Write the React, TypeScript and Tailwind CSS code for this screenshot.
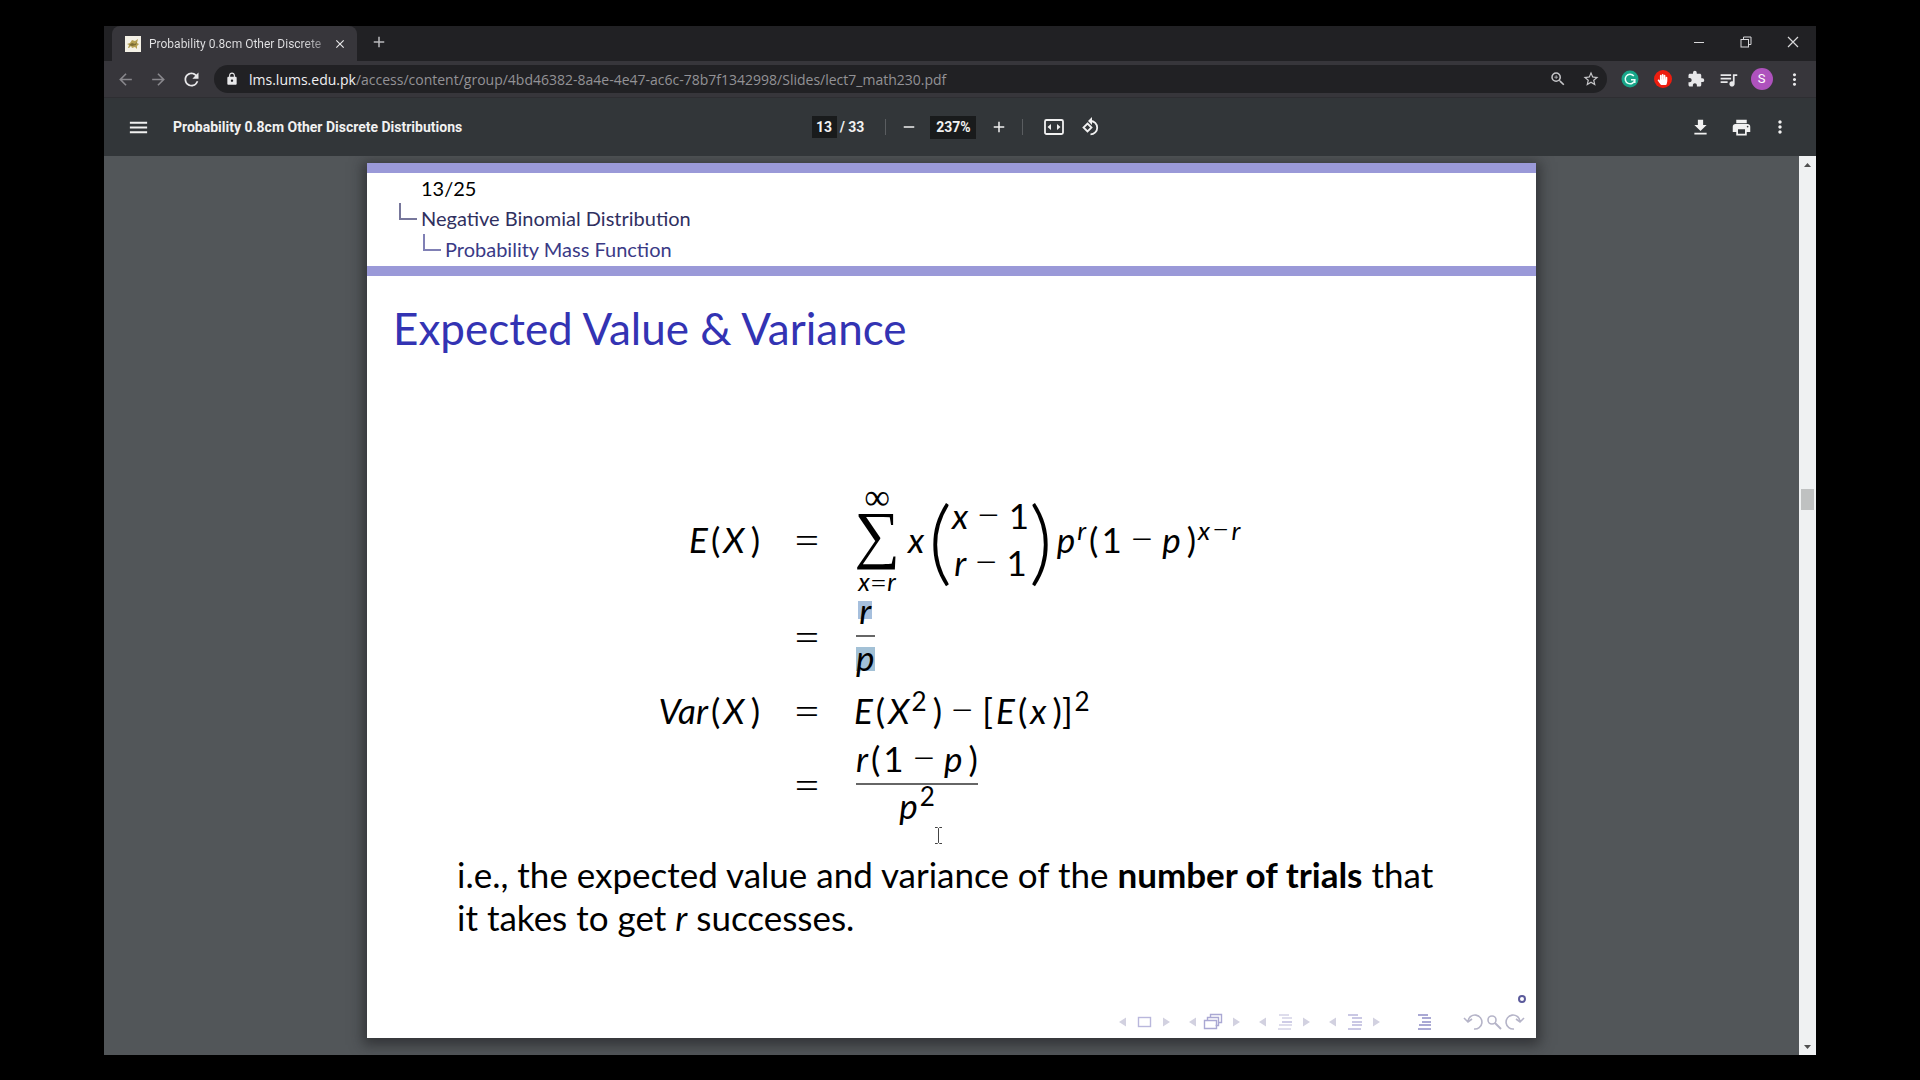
import type { ReactNode } from "react";
import {
  MdAdd,
  MdArrowBack,
  MdArrowForward,
  MdClose,
  MdExtension,
  MdGetApp,
  MdLock,
  MdMenu,
  MdMoreVert,
  MdPrint,
  MdQueueMusic,
  MdRefresh,
  MdRemove,
  MdStarBorder,
  MdZoomIn,
} from "react-icons/md";
import { FaHandPaper } from "react-icons/fa";

function IconButton({ label, className = "", children }: { label: string; className?: string; children: ReactNode }) {
  return (
    <button type="button" aria-label={label} className={`flex h-8 shrink-0 items-center justify-center ${className}`}>
      {children}
    </button>
  );
}

function TabStrip() {
  return (
    <div className="flex h-[35px] justify-between bg-[#212124] pl-2">
      <div className="flex">
        <div className="flex w-[245px] items-center rounded-t-lg bg-[#37363b] pl-[13px] pr-1">
          <svg viewBox="0 0 16 16" className="h-4 w-4 shrink-0">
            <rect width="16" height="16" fill="#f4f1e6" />
            <path d="M2 8l3-1 2-3 3 1 3-2-1 4 2 1-2 2v3l-2-2-3 1-1-2-2 2H3l1-3z" fill="#b5a052" />
            <path d="M4 9l3-2 3 1 2-2-1 3-4 1z" fill="#7d6c33" />
          </svg>
          <span className="ml-2 w-[179px] overflow-hidden whitespace-nowrap bg-gradient-to-r from-[#e4e4e6] from-85% to-[#77767b] bg-clip-text font-['Roboto',sans-serif] text-[12px] text-transparent">
            Probability 0.8cm Other Discrete
          </span>
          <IconButton label="Close tab" className="w-6 text-[#e8e8ea]">
            <MdClose size={14} />
          </IconButton>
        </div>
        <IconButton label="New tab" className="w-11 text-[#b9b9bc]">
          <MdAdd size={18} />
        </IconButton>
      </div>
      <div className="flex text-[#d8d8da]">
        <IconButton label="Minimize" className="w-[47px]">
          <svg viewBox="0 0 12 12" className="h-3 w-3"><path d="M1 6.5h10" stroke="currentColor" /></svg>
        </IconButton>
        <IconButton label="Restore" className="w-[47px]">
          <svg viewBox="0 0 12 12" className="h-3 w-3" fill="none" stroke="currentColor">
            <rect x="1" y="3.5" width="7.5" height="7.5" />
            <path d="M3.5 3.500V1H11v7.500H8.500" />
          </svg>
        </IconButton>
        <IconButton label="Close" className="w-[47px]">
          <svg viewBox="0 0 12 12" className="h-3 w-3"><path d="M1 1l10 10M11 1L1 11" stroke="currentColor" strokeWidth="1.2" /></svg>
        </IconButton>
      </div>
    </div>
  );
}

function AddressBar() {
  return (
    <div className="flex h-[37px] items-center border-b border-[#2e2e32] bg-[#37363b] pl-[5px] pr-[5px] text-[#e8e8ea]">
      <IconButton label="Back" className="w-[33px] text-[#88878c]"><MdArrowBack size={19} /></IconButton>
      <IconButton label="Forward" className="w-[33px] text-[#88878c]"><MdArrowForward size={19} /></IconButton>
      <IconButton label="Reload" className="w-[33px]"><MdRefresh size={21} /></IconButton>
      <div className="mx-1.5 flex h-7 min-w-0 flex-1 items-center rounded-full bg-[#212124] pl-[11px]">
        <MdLock size={14} className="shrink-0" />
        <div role="textbox" aria-label="Address" className="ml-2.5 flex-1 truncate text-[14px] text-[#939296]">
          <span className="text-[#f0f0f2]">lms.lums.edu.pk</span>
          /access/content/group/4bd46382-8a4e-4e47-ac6c-78b7f1342998/Slides/lect7_math230.pdf
        </div>
        <IconButton label="Zoom" className="w-[33px] text-[#c6c6c9]"><MdZoomIn size={18} /></IconButton>
        <IconButton label="Bookmark" className="w-[33px] text-[#c6c6c9]"><MdStarBorder size={18} /></IconButton>
      </div>
      <IconButton label="Grammarly" className="w-[33px]">
        <svg viewBox="0 0 18 18" className="h-[18px] w-[18px]">
          <circle cx="9" cy="9" r="8.500" fill="#17a589" />
          <path d="M12.800 6A4.800 4.800 0 1 0 13.800 9.800H10M13.800 9.800V13" fill="none" stroke="#e8fff9" strokeWidth="1.500" />
        </svg>
      </IconButton>
      <IconButton label="Ad blocker" className="w-[33px]">
        <span className="flex h-[18px] w-[18px] items-center justify-center rounded-full bg-[#ee1d0f] text-white">
          <FaHandPaper size={11} />
        </span>
      </IconButton>
      <IconButton label="Extensions" className="w-[33px]"><MdExtension size={18} /></IconButton>
      <IconButton label="Media" className="w-[33px]"><MdQueueMusic size={21} /></IconButton>
      <IconButton label="Profile" className="w-[33px]">
        <span className="flex h-[22px] w-[22px] items-center justify-center rounded-full bg-[#ae52bd] font-['Roboto',sans-serif] text-[13px] text-white">
          S
        </span>
      </IconButton>
      <IconButton label="Menu" className="w-[33px]"><MdMoreVert size={19} /></IconButton>
    </div>
  );
}

function PdfToolbar() {
  return (
    <div className="grid h-[58px] grid-cols-[1fr_auto_1fr] items-center bg-[#323639] pl-[18px] pr-[18px] font-['Roboto',sans-serif] text-[14px] font-bold text-[#f1f1f1]">
      <div className="flex items-center">
        <IconButton label="Toggle sidebar" className="w-8"><MdMenu size={23} /></IconButton>
        <h1 className="ml-[19px] whitespace-nowrap">Probability 0.8cm Other Discrete Distributions</h1>
      </div>
      <div className="flex items-center">
        <input aria-label="Page" defaultValue="13" className="h-[22px] w-[25px] bg-[#191b1c] text-center" />
        <span className="ml-[3px]">/&nbsp;33</span>
        <span className="ml-[21px] h-4 w-px bg-[#5a5d60]" />
        <IconButton label="Zoom out" className="ml-1.5 w-[34px]"><MdRemove size={18} /></IconButton>
        <input aria-label="Zoom level" defaultValue="237%" className="ml-1 h-[23px] w-[46px] bg-[#191b1c] text-center" />
        <IconButton label="Zoom in" className="ml-1.5 w-[34px]"><MdAdd size={18} /></IconButton>
        <span className="ml-1.5 h-4 w-px bg-[#5a5d60]" />
        <IconButton label="Fit to page" className="ml-3.5 w-[34px]">
          <svg viewBox="0 0 20 18" className="h-[18px] w-5">
            <rect x="1" y="2" width="18" height="14" rx="1.500" fill="none" stroke="currentColor" strokeWidth="1.800" />
            <path d="M3.500 9L7 6v6zM16.500 9L13 6v6z" fill="currentColor" />
          </svg>
        </IconButton>
        <IconButton label="Rotate" className="ml-[3px] w-[34px]">
          <svg viewBox="0 0 20 20" className="h-5 w-5" fill="none" stroke="currentColor" strokeWidth="1.800">
            <path d="M6.500 6.500L10.500 10.500 6.500 14.500 2.500 10.500z" />
            <path d="M9.500 4A6.700 6.700 0 1 1 9.500 17.400" />
            <path d="M11 0v8L7 4z" fill="currentColor" stroke="none" />
          </svg>
        </IconButton>
      </div>
      <div className="flex items-center justify-end">
        <IconButton label="Download" className="w-[41px]"><MdGetApp size={21} /></IconButton>
        <IconButton label="Print" className="w-[41px]"><MdPrint size={21} /></IconButton>
        <IconButton label="More" className="w-9"><MdMoreVert size={20} /></IconButton>
      </div>
    </div>
  );
}

function Row({ height, left, children }: { height: string; left?: ReactNode; children: ReactNode }) {
  return (
    <div className={`grid grid-cols-[393px_94px_1fr] items-center ${height}`}>
      <div className="text-right">{left}</div>
      <div className="flex justify-center pb-[3px]">
        <span className="text-[48px] font-light">=</span>
      </div>
      <div className="flex items-center whitespace-nowrap">{children}</div>
    </div>
  );
}

function Fraction({ top, bottom }: { top: ReactNode; bottom: ReactNode }) {
  return (
    <div className="ml-0.5 flex flex-col items-center">
      <div className="h-[41px] leading-8">{top}</div>
      <div className="h-0.5 w-full bg-[#666]" />
      <div className="h-[41px] leading-10">{bottom}</div>
    </div>
  );
}

function Up({ children }: { children: ReactNode }) {
  return <sup className="ml-0.5 text-[26px] leading-none">{children}</sup>;
}

function Paren({ children }: { children: ReactNode }) {
  return (
    <>
      <span className="mx-[3px]">(</span>
      {children}
      <span className="ml-1.5">)</span>
    </>
  );
}

function Minus() {
  return <span className="mx-2 text-[42px] font-light leading-[0]">−</span>;
}

function Equations() {
  return (
    <div className="text-[35px] leading-8">
      <Row height="h-[110px]" left={<><i>E</i><Paren><i>X</i></Paren></>}>
        <div className="flex w-[46px] flex-col items-center">
          <span className="flex h-[26px] items-center font-['Liberation_Serif',serif] text-[36px] leading-6">∞</span>
          <span className="flex h-[58px] items-center pb-2 font-['Liberation_Serif',serif] text-[64px] leading-[50px]">∑</span>
          <span className="flex h-[26px] items-center text-[25px] leading-6"><i>x</i><span className="text-[30px] font-light">=</span><i>r</i></span>
        </div>
        <i className="ml-2">x</i>
        <span className="ml-1 text-[92px] font-light leading-none">(</span>
        <div className="flex flex-col items-center leading-[47px]">
          <span className="h-[47px]"><i>x</i><Minus />1</span>
          <span className="h-[47px]"><i>r</i><Minus />1</span>
        </div>
        <span className="mr-1 text-[92px] font-light leading-none">)</span>
        <span><i>p</i><Up><i>r</i></Up><Paren>1<Minus /><i>p</i></Paren><Up><i>x</i><span className="mx-0.5 text-[30px] font-light">−</span><i>r</i></Up></span>
      </Row>
      <Row height="h-[84px]">
        <Fraction
          top={<i className="inline-block h-[18px] bg-[#a6bfdd] px-px leading-[18px]">r</i>}
          bottom={<i className="inline-block h-6 bg-[#a3c1d6] leading-5">p</i>}
        />
      </Row>
      <Row height="h-16" left={<><i>Var</i><Paren><i>X</i></Paren></>}>
        <span>
          <i>E</i><Paren><i>X</i><Up>2</Up></Paren><Minus />
          <span className="mr-[3px]">[</span><i>E</i><Paren><i>x</i></Paren>]<Up>2</Up>
        </span>
      </Row>
      <Row height="h-[82px]">
        <Fraction top={<><i>r</i><Paren>1<Minus /><i>p</i></Paren></>} bottom={<><i>p</i><Up>2</Up></>} />
      </Row>
    </div>
  );
}

function Elbow({ className }: { className: string }) {
  return <span className={`h-[17px] w-[18px] border-b-2 border-l-2 ${className}`} />;
}

function SlideNavigation() {
  const arrows = [43, 113, 183, 253];
  return (
    <svg viewBox="0 0 410 20" className="h-5 w-[410px]" fill="none" stroke="#b9b7dc" strokeWidth="1.400" role="img" aria-label="Slide navigation">
      {arrows.map((x) => (
        <g key={x} fill="#d2d1e0" stroke="none">
          <path d={`M${x - 43} 10l7-4.500v9z`} />
          <path d={`M${x + 8} 10l-7-4.500v9z`} />
        </g>
      ))}
      <rect x="19.500" y="5.500" width="12" height="9" />
      <path d="M85.500 8.500h12v8h-12zM88.500 8.500v-3h11v8h-3M91.500 5.500v-3h11v8h-3" stroke="#aaa8d3" />
      <path d="M160 3h10M163 6h10M160 13h13M159 17h13" stroke="#d3d2e6" />
      <path d="M163 10h10" />
      <path d="M229 3h10M233 6h10M233 10h10M233 13h10M229 17h13" />
      <path d="M299 3h10M303 6h9M303 10h9M300 13h12M299 17h13" stroke="#8f8dc6" />
      <g stroke="#b5b4c8" strokeWidth="1.600">
        <path d="M349 9A7 7 0 1 1 355 17M345 6l4 4 4-3" />
        <circle cx="373" cy="8" r="4" />
        <path d="M376 11l6 6" strokeWidth="2" />
        <path d="M401 9A7 7 0 1 0 395 17M405 6l-4 4-4-3" />
      </g>
    </svg>
  );
}

function Slide() {
  return (
    <article className="relative flex w-[1169px] flex-col bg-white font-['Lato',sans-serif] text-black shadow-[0_3px_12px_4px_rgba(30,30,34,0.6)]">
      <header className="flex h-[113px] flex-col border-y-[10px] border-[#9a99d8] text-[20px] leading-[31px]">
        <p className="pl-[54px] leading-[30px]">13/25</p>
        <p className="flex pl-8 text-[#30305f]"><Elbow className="mr-1 border-[#77779b]" />Negative Binomial Distribution</p>
        <p className="flex pl-14 text-[#3a3a86]"><Elbow className="mr-1 border-[#8080b5]" />Probability Mass Function</p>
      </header>
      <h2 className="pl-[26px] pt-[22px] text-[44px] leading-[60px] text-[#3333b3]">Expected Value &amp; Variance</h2>
      <div className="pt-[126px]">
        <Equations />
      </div>
      <p className="pl-[90px] pt-[29px] text-[35px] leading-[43px]">
        i.e., the expected value and variance of the <b>number of trials</b> that
        <br />
        it takes to get <i>r</i> successes.
      </p>
      <footer className="flex flex-col items-end pb-1.5 pr-[7px] pt-14">
        <span className="mb-[9px] mr-[3px] h-2 w-2 rounded-full border-2 border-[#5b5a9b]" />
        <SlideNavigation />
      </footer>
      <svg viewBox="0 0 9 17" className="absolute left-[567px] top-[664px] h-[17px] w-[9px]" fill="none" stroke="#444">
        <path d="M1 .5h2.500l1 1 1-1H8M1 16.500h2.500l1-1 1 1H8M4.500 1.500v14" />
      </svg>
    </article>
  );
}

function Scrollbar() {
  return (
    <div className="flex w-[17px] shrink-0 flex-col items-center bg-[#eff1f2]">
      <svg viewBox="0 0 17 17" className="h-[17px] w-[17px]"><path d="M5 11h7L8.500 7z" fill="#505050" /></svg>
      <div className="mt-[316px] h-[21px] w-[13px] bg-[#bfc1c1]" />
      <svg viewBox="0 0 17 17" className="mt-auto h-[17px] w-[17px]"><path d="M5 7h7l-3.500 4z" fill="#505050" /></svg>
    </div>
  );
}

export default function App() {
  return (
    <div className="h-screen bg-black px-[104px] pb-[25px] pt-[26px]">
      <div className="flex h-full flex-col overflow-hidden font-['Open_Sans','Noto_Sans',sans-serif]">
        <TabStrip />
        <AddressBar />
        <PdfToolbar />
        <main className="flex min-h-0 flex-1">
          <div className="flex flex-1 items-start justify-center overflow-hidden bg-[#525659] pt-[7px]">
            <Slide />
          </div>
          <Scrollbar />
        </main>
      </div>
    </div>
  );
}
